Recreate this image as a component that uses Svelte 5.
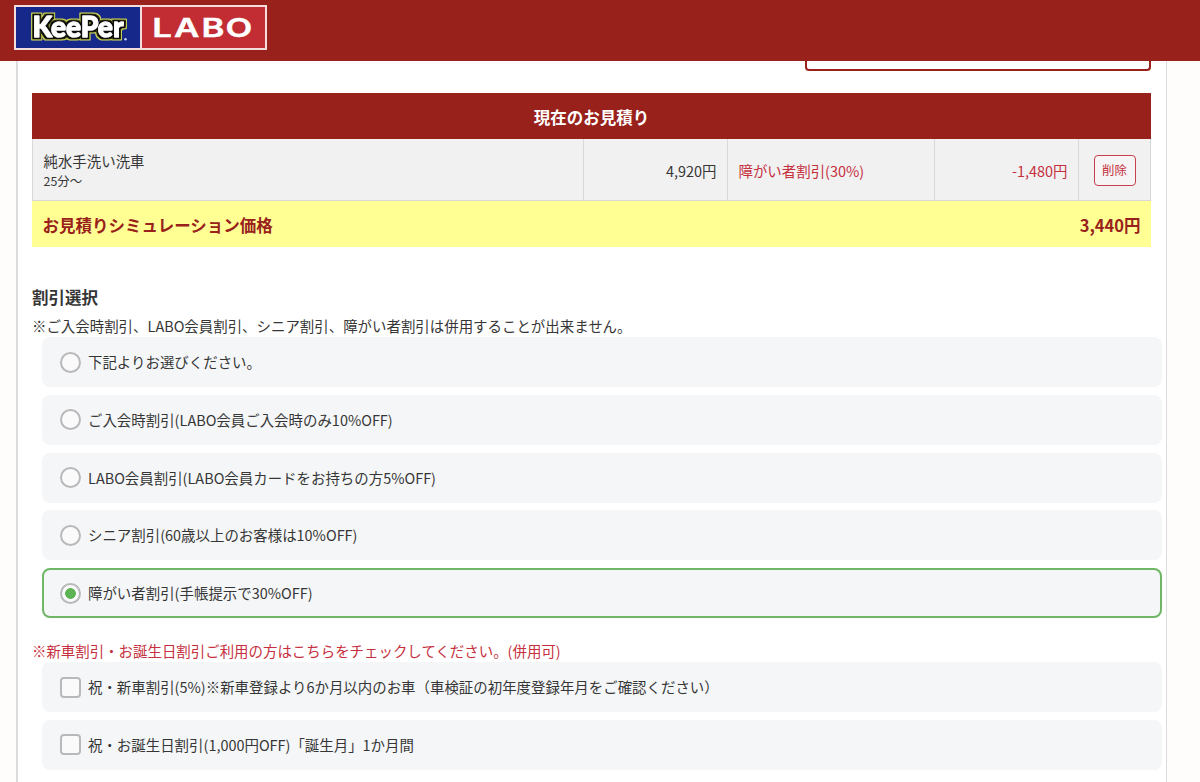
<script>
  const discounts = [
    '下記よりお選びください。',
    'ご入会時割引(LABO会員ご入会時のみ10%OFF)',
    'LABO会員割引(LABO会員カードをお持ちの方5%OFF)',
    'シニア割引(60歳以上のお客様は10%OFF)',
    '障がい者割引(手帳提示で30%OFF)'
  ];
  const extras = [
    '祝・新車割引(5%)※新車登録より6か月以内のお車（車検証の初年度登録年月をご確認ください）',
    '祝・お誕生日割引(1,000円OFF)「誕生月」1か月間'
  ];
  let selected = $state(4);
  let checked = $state([false, false]);
</script>

<div class="page">
  <header>
    <svg class="logo" width="253" height="45" viewBox="0 0 253 45">
      <defs>
        <filter id="outline" x="-10%" y="-30%" width="120%" height="160%">
          <feMorphology in="SourceAlpha" operator="dilate" radius="3" result="wide" />
          <feMorphology in="SourceAlpha" operator="dilate" radius="2" result="thin" />
          <feFlood flood-color="#c9d055" />
          <feComposite in2="wide" operator="in" result="rim" />
          <feFlood flood-color="#08080c" />
          <feComposite in2="thin" operator="in" result="edge" />
          <feMerge>
            <feMergeNode in="rim" />
            <feMergeNode in="edge" />
            <feMergeNode in="SourceGraphic" />
          </feMerge>
        </filter>
      </defs>
      <rect width="253" height="45" fill="#f3dcdc" />
      <rect x="2" y="2" width="124" height="41" fill="#16298a" />
      <rect x="128" y="2" width="123" height="41" fill="#c22d33" />
      <g filter="url(#outline)">
        <text class="keeper" x="18.5" y="32" textLength="91" lengthAdjust="spacingAndGlyphs">KeePer</text>
      </g>
      <circle cx="111.5" cy="34.3" r="1.2" fill="#c8d2f2" />
      <text class="labo" transform="translate(138.3 32) scale(1.34 1)" x="0 16.2 36.7 54.6">LABO</text>
    </svg>
  </header>

  <main>
    <div class="panel-button"></div>

    <section class="estimate">
      <h2>現在のお見積り</h2>
      <div class="row">
        <div class="cell name"><span>純水手洗い洗車</span><small>25分〜</small></div>
        <div class="cell num">4,920円</div>
        <div class="cell red">障がい者割引(30%)</div>
        <div class="cell num red">-1,480円</div>
        <div class="cell action"><button>削除</button></div>
      </div>
      <div class="total"><span>お見積りシミュレーション価格</span><span>3,440円</span></div>
    </section>

    <h3>割引選択</h3>
    <p class="note">※ご入会時割引、LABO会員割引、シニア割引、障がい者割引は併用することが出来ません。</p>
    <div class="options">
      {#each discounts as label, i}
        <label class="option" class:active={selected === i}>
          <input type="radio" name="discount" value={i} bind:group={selected} />
          <span>{label}</span>
        </label>
      {/each}
    </div>

    <p class="note red second">※新車割引・お誕生日割引ご利用の方はこちらをチェックしてください。(併用可)</p>
    <div class="options">
      {#each extras as label, i}
        <label class="option" class:active={checked[i]}>
          <input type="checkbox" bind:checked={checked[i]} />
          <span>{label}</span>
        </label>
      {/each}
    </div>
  </main>
</div>

<style>
  :global(body) { overflow: hidden; }
  .page {
    box-sizing: border-box;
    height: 782px;
    overflow: hidden;
    background: #fefdfb;
    color: #363636;
    font: 14.45px/22px "Noto Sans CJK JP", sans-serif;
  }
  header {
    box-sizing: border-box;
    height: 61px;
    padding: 5px 0 0 14px;
    background: #98221b;
  }
  .logo { display: block; }
  .keeper {
    font: 900 28px Lato, sans-serif;
    fill: #fff;
    stroke: #fff;
    stroke-width: 0.9px;
    stroke-linejoin: round;
  }
  .labo {
    font: 600 26px Inter, sans-serif;
    fill: #fff;
    stroke: #fff;
    stroke-width: 0.4px;
  }
  main {
    box-sizing: border-box;
    width: 1151px;
    height: 721px;
    margin-left: 16px;
    padding: 0 15px 0 14px;
    border: solid #dcdcde;
    border-width: 0 1px 0 2px;
    background: #fff;
  }
  .panel-button {
    box-sizing: border-box;
    width: 346px;
    height: 9.5px;
    margin-left: auto;
    border: 2px solid #98221b;
    border-top: 0;
    border-radius: 0 0 4px 4px;
  }
  .estimate { margin-top: 22.5px; }
  h2 {
    margin: 0;
    height: 46px;
    background: #98221b;
    color: #fff;
    font-size: 16.5px;
    line-height: 48px;
    text-align: center;
  }
  .row {
    box-sizing: border-box;
    display: grid;
    grid-template-columns: 550.5px 144.5px 206.5px 144.5px 1fr;
    height: 62px;
    border: solid #d8d8d8;
    border-width: 0 0 1px 1px;
    background: #f1f1f1;
  }
  .cell {
    display: flex;
    align-items: center;
    padding: 2px 10.5px 0;
    border-right: 1px solid #d8d8d8;
  }
  .name { flex-direction: column; align-items: flex-start; justify-content: center; padding-top: 1px; padding-bottom: 0; }
  .name small { font-size: 12.4px; line-height: 18px; }
  .num { justify-content: flex-end; }
  .red { color: #c62f3d; }
  .action { justify-content: center; padding: 1px 0 0; }
  button {
    width: 42px;
    height: 31px;
    padding: 0;
    border: 1px solid #c8404d;
    border-radius: 4px;
    background: #f6f4f4;
    color: #c62f3d;
    font: 12.4px/29px "Noto Sans CJK JP", sans-serif;
  }
  .total {
    display: flex;
    justify-content: space-between;
    height: 46px;
    padding: 0 10.5px;
    background: #ffff94;
    color: #98221b;
    font-size: 16.5px;
    font-weight: 700;
    line-height: 48px;
  }
  h3 { margin: 37px 0 0; font-size: 16.5px; line-height: 26px; }
  .note { height: 22px; margin: 5px 0 0; }
  .options {
    display: grid;
    gap: 7.8px;
    width: 1119.5px;
    margin-left: 10px;
  }
  .option {
    box-sizing: border-box;
    display: flex;
    align-items: center;
    gap: 7.5px;
    height: 50px;
    padding: 0 15.5px;
    border: 2px solid transparent;
    border-radius: 8px;
    background: #f5f6f8 border-box;
  }
  .option.active { border-color: #6fb666; }
  input {
    box-sizing: border-box;
    flex: none;
    width: 21px;
    height: 21px;
    margin: 0;
    appearance: none;
    border: 2px solid #b9b9bb;
    border-radius: 4px;
    background: #fafafa;
  }
  input[type="radio"] { border-radius: 50%; }
  input[type="radio"]:checked { background: radial-gradient(circle, #5eb454 5px, #fafafa 5.7px); }
  input[type="checkbox"]:checked { background: #5eb454; }
  .second { margin-top: 22px; }
</style>
